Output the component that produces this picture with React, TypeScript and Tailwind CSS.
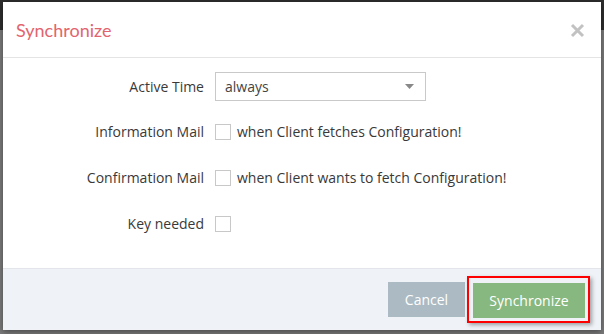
import React from 'react';

function Row({ label, children }: { label: string; children: React.ReactNode }) {
  return (
    <div className="flex items-center h-[21px]">
      <div className="w-[212px] pr-[11px] text-right text-[14px] text-[#393939]">{label}</div>
      <div className="flex items-center gap-[6px]">{children}</div>
    </div>
  );
}

function Box() {
  return <span className="inline-block w-[16px] h-[16px] border border-[#c8c8c8] bg-white" />;
}

export default function App() {
  return (
    <div
      className="relative w-[604px] h-[334px] overflow-hidden bg-[#7a7a7a]"
      style={{ fontFamily: '"Open Sans", "Noto Sans", sans-serif' }}
    >
      <div className="h-[30px] bg-[#2d2d2d]" />

      {/* modal */}
      <div className="absolute left-[3px] top-[2px] w-[598px] h-[328px] bg-white flex flex-col shadow-[0_2px_6px_rgba(0,0,0,0.4)]">
        <div className="h-[56px] border-b border-[#e4e4e4] flex items-center justify-between pl-[13px] pr-[16px]">
          <span className="text-[18px] text-[#e2646e] mt-[2px] font-['Lato',sans-serif]">Synchronize</span>
          <svg width="15" height="15" viewBox="0 0 15 15" className="mt-[2px]">
            <path d="M2 2 L13 13 M13 2 L2 13" stroke="#c2c2c2" strokeWidth="3" />
          </svg>
        </div>

        <div className="flex-1 flex flex-col pt-[14px]">
          <div className="flex items-center">
            <div className="w-[212px] pr-[11px] text-right text-[14px] text-[#393939]">Active Time</div>
            <div className="w-[211px] h-[29px] border border-[#c9c9c9] flex items-center justify-between pl-[9px] pr-[11px] text-[14px] text-[#444]">
              <span>always</span>
              <svg width="9" height="5" viewBox="0 0 9 5">
                <path d="M0 0 H9 L4.5 5 Z" fill="#888" />
              </svg>
            </div>
          </div>
          <div className="flex flex-col gap-[25px] mt-[20px]">
            <Row label="Information Mail">
              <Box />
              <span className="text-[14px] text-[#393939]">when Client fetches Configuration!</span>
            </Row>
            <Row label="Confirmation Mail">
              <Box />
              <span className="text-[14px] text-[#393939]">when Client wants to fetch Configuration!</span>
            </Row>
            <Row label="Key needed">
              <Box />
            </Row>
          </div>
        </div>

        <div className="h-[62px] bg-[#eff3f8] border-t border-[#e2e6ea] flex items-center justify-end gap-[2px] pr-[11px]">
          <button className="w-[77px] h-[35px] bg-[#abbac3] text-white text-[14px]">Cancel</button>
          <div className="border-2 border-[#ff0000] pl-[4px] pr-[3px] pt-[5px] pb-[3px] shadow-[2px_2px_4px_rgba(0,0,0,0.35)]">
            <button className="w-[112px] h-[35px] bg-[#87b87f] text-white text-[14px] block">Synchronize</button>
          </div>
        </div>
      </div>
    </div>
  );
}
